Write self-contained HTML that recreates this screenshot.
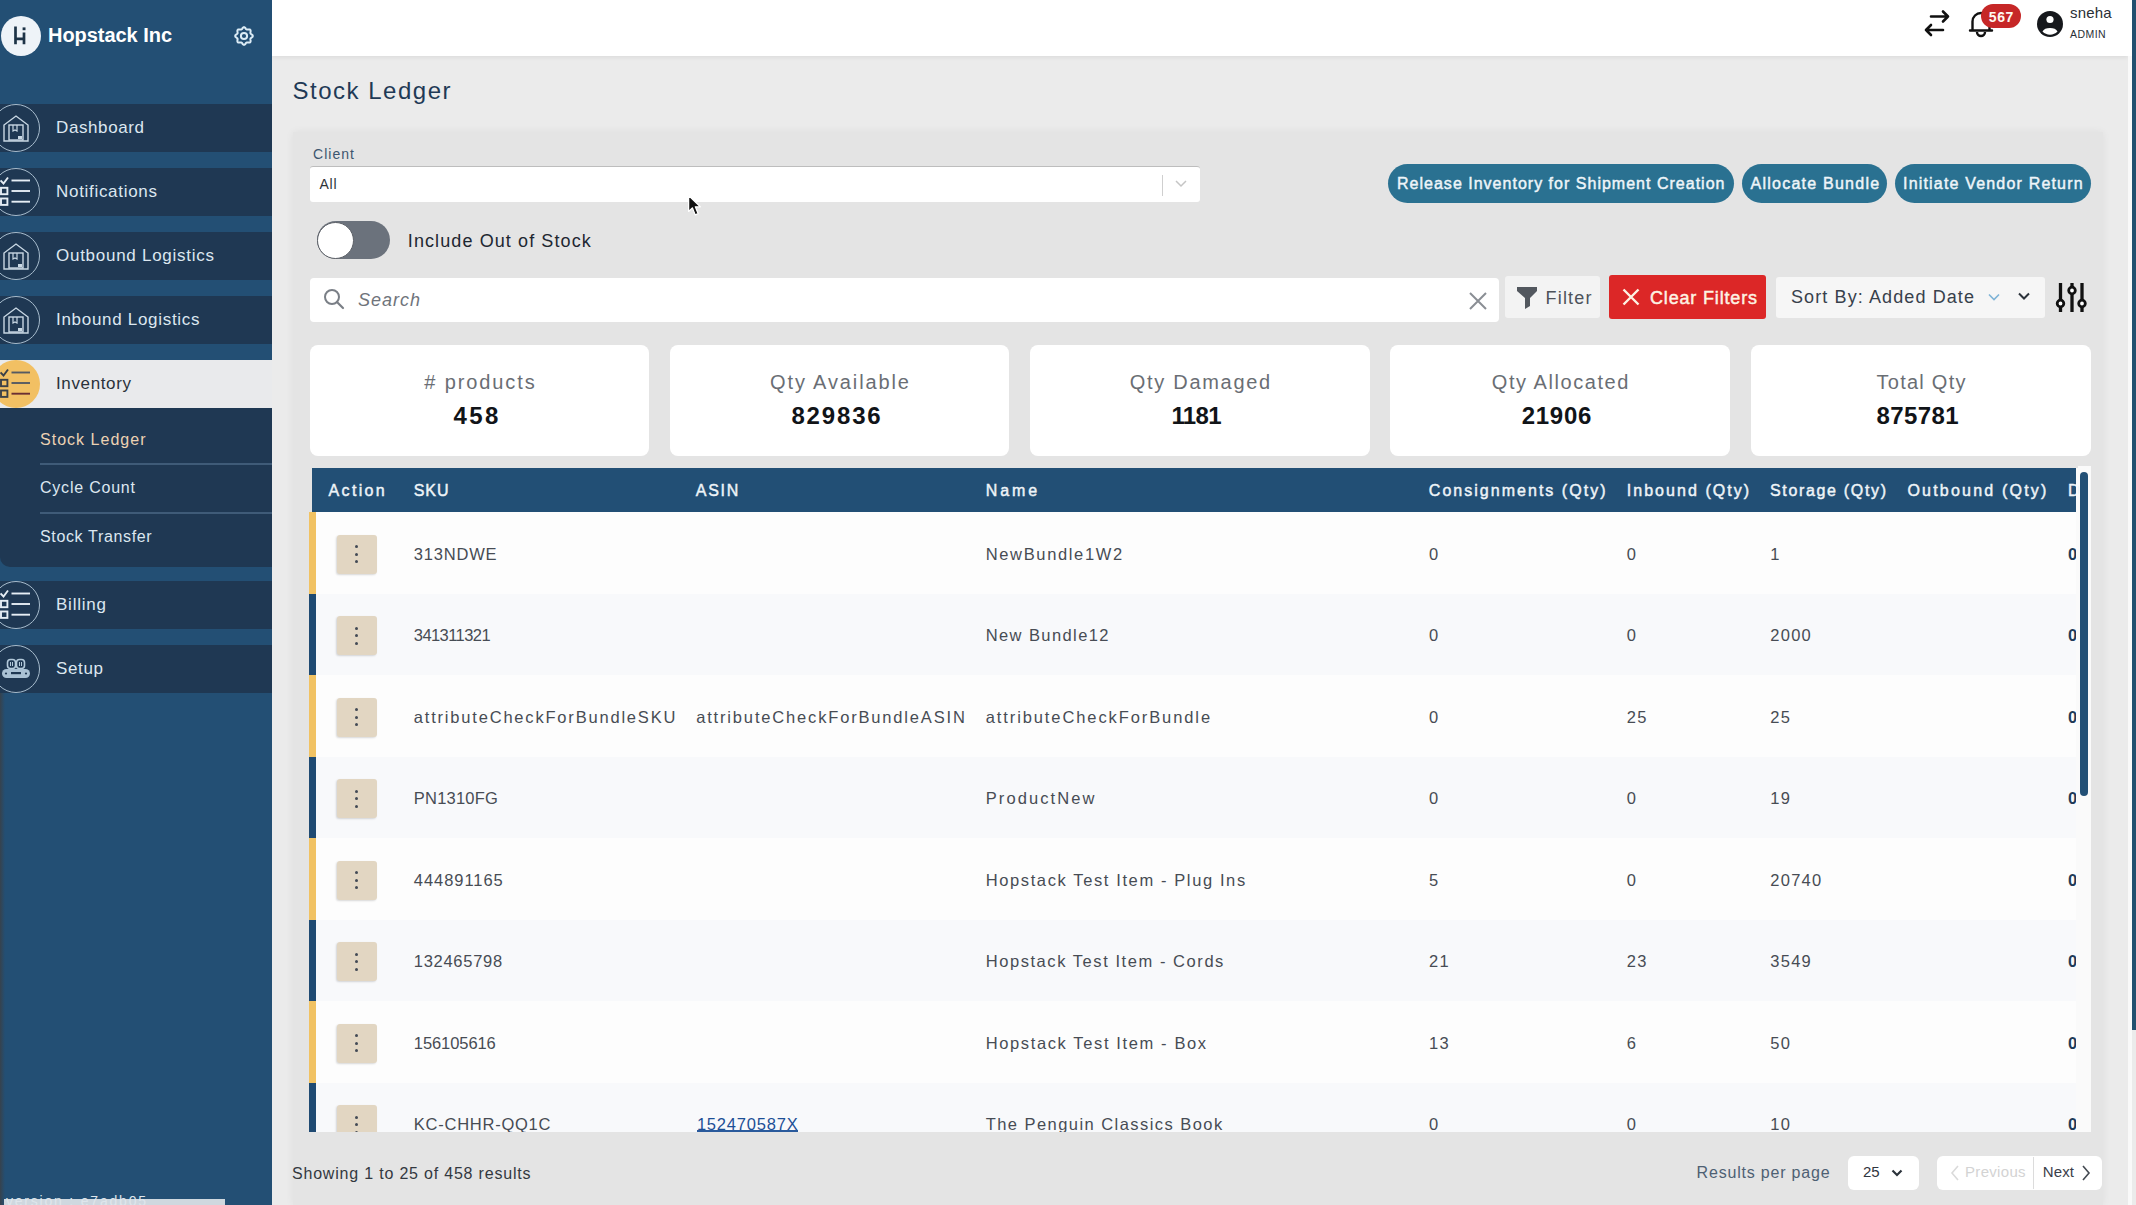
<!DOCTYPE html>
<html><head><meta charset="utf-8">
<style>
*{margin:0;padding:0;box-sizing:border-box}
html,body{width:2136px;height:1205px;overflow:hidden;background:#ebebeb;font-family:"Liberation Sans",sans-serif}
.a{position:absolute}
.t{position:absolute;white-space:nowrap;line-height:1}
svg{position:absolute;overflow:visible}
</style></head><body>
<div class='a' style='left:272px;top:56px;width:1856px;height:1149px;background:#ebebeb'></div>
<div class='a' style='left:293px;top:132px;width:1810px;height:1073px;background:#e4e4e4;box-shadow:0 0 8px rgba(0,0,0,.06)'></div>
<div class='a' style='left:272px;top:0;width:1856px;height:56px;background:#fff;box-shadow:0 2px 4px rgba(0,0,0,.06)'></div>
<div class='a' style='left:2128px;top:0;width:4px;height:1205px;background:#f9f9f9'></div>
<div class='a' style='left:2128px;top:0;width:4px;height:56px;background:#fff'></div>
<div class='a' style='left:2132px;top:0;width:4px;height:1030px;background:#23506f'></div>
<div class='a' style='left:0;top:0;width:272px;height:1205px;background:#234f74'></div>
<div class='a' style='left:0;top:690px;width:7px;height:515px;background:linear-gradient(90deg,#36424d 0,rgba(35,79,116,0) 5px)'></div>
<div class='a' style='left:0;top:104px;width:272px;height:48px;background:#1f3853'></div>
<div class='a' style='left:-8px;top:104px;width:48px;height:48px;border-radius:50%;border:1.4px solid #a7bccd'></div>
<div class='a' style='left:0;top:168px;width:272px;height:48px;background:#1f3853'></div>
<div class='a' style='left:-8px;top:168px;width:48px;height:48px;border-radius:50%;border:1.4px solid #a7bccd'></div>
<div class='a' style='left:0;top:232px;width:272px;height:48px;background:#1f3853'></div>
<div class='a' style='left:-8px;top:232px;width:48px;height:48px;border-radius:50%;border:1.4px solid #a7bccd'></div>
<div class='a' style='left:0;top:296px;width:272px;height:48px;background:#1f3853'></div>
<div class='a' style='left:-8px;top:296px;width:48px;height:48px;border-radius:50%;border:1.4px solid #a7bccd'></div>
<div class='a' style='left:0;top:581px;width:272px;height:48px;background:#1f3853'></div>
<div class='a' style='left:-8px;top:581px;width:48px;height:48px;border-radius:50%;border:1.4px solid #a7bccd'></div>
<div class='a' style='left:0;top:645px;width:272px;height:48px;background:#1f3853'></div>
<div class='a' style='left:-8px;top:645px;width:48px;height:48px;border-radius:50%;border:1.4px solid #a7bccd'></div>
<div class='a' style='left:0;top:360px;width:272px;height:48px;background:#e9eaec'></div>
<div class='a' style='left:-8px;top:360px;width:48px;height:48px;border-radius:50%;background:#f2c063'></div>
<div class='a' style='left:0;top:408px;width:272px;height:159px;background:#1f3853;border-bottom-left-radius:10px'></div>
<div class='a' style='left:40px;top:463px;width:232px;height:1.5px;background:#3f5b78'></div>
<div class='a' style='left:40px;top:512px;width:232px;height:1.5px;background:#3f5b78'></div>
<div class='a' style='left:0.5px;top:15.8px;width:40px;height:40px;border-radius:50%;background:#eef3f8'></div>
<svg style='left:0;top:15px' width='40' height='40' viewBox='0 0 40 40'>
<path d='M15.5 11.5 V29.2 M15.5 23.8 H24 M24 17.6 V29.2' stroke='#1d3347' stroke-width='2.7' fill='none'/>
<rect x='22.6' y='12.4' width='2.9' height='2.8' fill='#1d3347'/></svg>
<svg style='left:232.2px;top:24.2px' width='24' height='24' viewBox='0 0 24 24'>
<path d='M12.00 3.20 L12.57 3.34 L13.09 3.72 L13.54 4.25 L13.93 4.80 L14.29 5.26 L14.68 5.53 L15.15 5.61 L15.72 5.55 L16.39 5.43 L17.08 5.38 L17.72 5.47 L18.22 5.78 L18.53 6.28 L18.62 6.92 L18.57 7.61 L18.45 8.27 L18.39 8.85 L18.47 9.32 L18.74 9.71 L19.20 10.07 L19.75 10.46 L20.28 10.91 L20.66 11.43 L20.80 12.00 L20.66 12.57 L20.28 13.09 L19.75 13.54 L19.20 13.93 L18.74 14.29 L18.47 14.68 L18.39 15.15 L18.45 15.72 L18.57 16.39 L18.62 17.08 L18.53 17.72 L18.22 18.22 L17.72 18.53 L17.08 18.62 L16.39 18.57 L15.72 18.45 L15.15 18.39 L14.68 18.47 L14.29 18.74 L13.93 19.20 L13.54 19.75 L13.09 20.28 L12.57 20.66 L12.00 20.80 L11.43 20.66 L10.91 20.28 L10.46 19.75 L10.07 19.20 L9.71 18.74 L9.32 18.47 L8.85 18.39 L8.28 18.45 L7.61 18.57 L6.92 18.62 L6.28 18.53 L5.78 18.22 L5.47 17.72 L5.38 17.08 L5.43 16.39 L5.55 15.73 L5.61 15.15 L5.53 14.68 L5.26 14.29 L4.80 13.93 L4.25 13.54 L3.72 13.09 L3.34 12.57 L3.20 12.00 L3.34 11.43 L3.72 10.91 L4.25 10.46 L4.80 10.07 L5.26 9.71 L5.53 9.32 L5.61 8.85 L5.55 8.27 L5.43 7.61 L5.38 6.92 L5.47 6.28 L5.78 5.78 L6.28 5.47 L6.92 5.38 L7.61 5.43 L8.27 5.55 L8.85 5.61 L9.32 5.53 L9.71 5.26 L10.07 4.80 L10.46 4.25 L10.91 3.72 L11.43 3.34 Z' fill='none' stroke='#dcecf6' stroke-width='2' stroke-linejoin='round'/>
<circle cx='12' cy='12' r='3.1' fill='none' stroke='#dcecf6' stroke-width='2'/></svg>
<svg style='left:0;top:108px' width='34' height='40' viewBox='0 0 34 40'>
<path d='M4 33 V17 L16 8 L28 17 V33 Z' fill='none' stroke='#c9d8e4' stroke-width='1.4'/>
<rect x='9' y='17' width='14' height='15' fill='none' stroke='#c9d8e4' stroke-width='1.4'/>
<path d='M13 17 V23 L15 22 L17 23 V17' fill='none' stroke='#c9d8e4' stroke-width='1.2'/>
<rect x='18' y='28' width='4' height='3' fill='#c9d8e4'/></svg>
<svg style='left:0;top:236px' width='34' height='40' viewBox='0 0 34 40'>
<path d='M4 33 V17 L16 8 L28 17 V33 Z' fill='none' stroke='#c9d8e4' stroke-width='1.4'/>
<rect x='9' y='17' width='14' height='15' fill='none' stroke='#c9d8e4' stroke-width='1.4'/>
<path d='M13 17 V23 L15 22 L17 23 V17' fill='none' stroke='#c9d8e4' stroke-width='1.2'/>
<rect x='18' y='28' width='4' height='3' fill='#c9d8e4'/></svg>
<svg style='left:0;top:300px' width='34' height='40' viewBox='0 0 34 40'>
<path d='M4 33 V17 L16 8 L28 17 V33 Z' fill='none' stroke='#c9d8e4' stroke-width='1.4'/>
<rect x='9' y='17' width='14' height='15' fill='none' stroke='#c9d8e4' stroke-width='1.4'/>
<path d='M13 17 V23 L15 22 L17 23 V17' fill='none' stroke='#c9d8e4' stroke-width='1.2'/>
<rect x='18' y='28' width='4' height='3' fill='#c9d8e4'/></svg>
<svg style='left:0;top:175px' width='34' height='34' viewBox='0 0 34 34'>
<path d='M0.5 5.5 L3.5 8.5 L8 2.5' fill='none' stroke='#e6eef5' stroke-width='1.9'/>
<rect x='1' y='12.8' width='6.4' height='6.4' fill='none' stroke='#e6eef5' stroke-width='1.9'/>
<rect x='1' y='23.5' width='6.4' height='6.4' fill='none' stroke='#e6eef5' stroke-width='1.9'/>
<path d='M11.5 5.5 H30' stroke='#e6eef5' stroke-width='1.9'/><path d='M11.5 16 H30' stroke='#e6eef5' stroke-width='1.9'/><path d='M11.5 26.7 H30' stroke='#e6eef5' stroke-width='1.9'/></svg>
<svg style='left:0;top:588px' width='34' height='34' viewBox='0 0 34 34'>
<path d='M0.5 5.5 L3.5 8.5 L8 2.5' fill='none' stroke='#e6eef5' stroke-width='1.9'/>
<rect x='1' y='12.8' width='6.4' height='6.4' fill='none' stroke='#e6eef5' stroke-width='1.9'/>
<rect x='1' y='23.5' width='6.4' height='6.4' fill='none' stroke='#e6eef5' stroke-width='1.9'/>
<path d='M11.5 5.5 H30' stroke='#e6eef5' stroke-width='1.9'/><path d='M11.5 16 H30' stroke='#e6eef5' stroke-width='1.9'/><path d='M11.5 26.7 H30' stroke='#e6eef5' stroke-width='1.9'/></svg>
<svg style='left:0;top:367px' width='34' height='34' viewBox='0 0 34 34'>
<path d='M0.5 5.5 L3.5 8.5 L8 2.5' fill='none' stroke='#3a4048' stroke-width='1.9'/>
<rect x='1' y='12.8' width='6.4' height='6.4' fill='none' stroke='#3a4048' stroke-width='1.9'/>
<rect x='1' y='23.5' width='6.4' height='6.4' fill='none' stroke='#3a4048' stroke-width='1.9'/>
<path d='M11.5 5.5 H30' stroke='#555a62' stroke-width='1.9'/><path d='M11.5 16 H30' stroke='#555a62' stroke-width='1.9'/><path d='M11.5 26.7 H30' stroke='#6b2f33' stroke-width='1.9'/></svg>
<svg style='left:0;top:651px' width='34' height='34' viewBox='0 0 34 34'>
<rect x='7.5' y='8.5' width='8' height='9' rx='3' fill='none' stroke='#b3c9da' stroke-width='1.6'/>
<rect x='16.5' y='8.5' width='8' height='9' rx='3' fill='none' stroke='#b3c9da' stroke-width='1.6'/>
<path d='M10.5 11 V15 M12.5 11 V15 M19.5 11 V15 M21.5 11 V15' stroke='#b3c9da' stroke-width='1'/>
<rect x='2' y='18' width='28' height='9' rx='4.5' fill='#a9c1d4'/>
<rect x='11' y='21' width='10' height='2.2' fill='#1f3853'/>
<circle cx='6' cy='22.5' r='1.1' fill='#1f3853'/><circle cx='26' cy='22.5' r='1.1' fill='#1f3853'/></svg>
<div class='a' style='left:4px;top:1199px;width:221px;height:6px;background:#cfd8df'></div>
<svg style='left:1922px;top:9px' width='30' height='30' viewBox='0 0 30 30'>
<path d='M9 7.5 H26 M21 2.5 L26 7.5 L21 12.5' fill='none' stroke='#111' stroke-width='2.6' stroke-linecap='round' stroke-linejoin='round'/>
<path d='M21 21 H4 M9 16 L4 21 L9 26' fill='none' stroke='#111' stroke-width='2.6' stroke-linecap='round' stroke-linejoin='round'/></svg>
<svg style='left:1967px;top:9px' width='30' height='30' viewBox='0 0 30 30'>
<path d='M3 21.5 H25 M5.5 21.5 V12.5 A8.5 8.5 0 0 1 22.5 12.5 V21.5' fill='none' stroke='#111' stroke-width='2.4' stroke-linecap='round'/>
<path d='M10 23 A4 4 0 0 0 18 23' fill='none' stroke='#111' stroke-width='2.4'/></svg>
<div class='a' style='left:1981px;top:4px;width:40px;height:24px;border-radius:12px;background:#c62727'></div>
<svg style='left:2037px;top:11px' width='26' height='26' viewBox='0 0 26 26'>
<circle cx='13' cy='13' r='13' fill='#16181c'/><circle cx='13' cy='8.5' r='3.6' fill='#fff'/>
<path d='M5.5 20.5 A8 5.2 0 0 1 20.5 20.5 A10.5 10.5 0 0 1 5.5 20.5 Z' fill='#fff'/></svg>
<div class='a' style='left:310px;top:166px;width:890px;height:36px;background:#fff;border-top:1px solid #bdbdbd;border-radius:3px'></div>
<div class='a' style='left:1162px;top:175px;width:1.2px;height:21px;background:#cfcfcf'></div>
<svg style='left:1175px;top:179px' width='12' height='10' viewBox='0 0 12 10'><path d='M1 2 L6 7 L11 2' fill='none' stroke='#c5c5c5' stroke-width='1.5'/></svg>
<div class='a' style='left:317px;top:221px;width:73px;height:38px;border-radius:19px;background:#6b727c'></div>
<div class='a' style='left:317px;top:221.5px;width:37px;height:37px;border-radius:50%;background:#fff;border:1.2px solid #5b5f66'></div>
<div class='a' style='left:1388px;top:164px;width:346px;height:39px;border-radius:20px;background:#2a7191'></div>
<div class='a' style='left:1742px;top:164px;width:145px;height:39px;border-radius:20px;background:#2a7191'></div>
<div class='a' style='left:1895px;top:164px;width:196px;height:39px;border-radius:20px;background:#2a7191'></div>
<div class='a' style='left:310px;top:278px;width:1189px;height:44px;background:#fff;border-radius:4px'></div>
<svg style='left:322px;top:287px' width='24' height='24' viewBox='0 0 24 24'><circle cx='10' cy='10' r='7' fill='none' stroke='#7a7f86' stroke-width='2'/><path d='M15 15 L21 21' stroke='#7a7f86' stroke-width='2.2' stroke-linecap='round'/></svg>
<svg style='left:1468px;top:291px' width='20' height='20' viewBox='0 0 20 20'><path d='M2 2 L18 18 M18 2 L2 18' stroke='#8a8e94' stroke-width='2'/></svg>
<div class='a' style='left:1505px;top:276px;width:95px;height:42px;background:#f3f3f3;border-radius:3px'></div>
<svg style='left:1516px;top:286px' width='22' height='23' viewBox='0 0 22 23'><path d='M1 1 H21 V5 L14 12 V20 L9 23 V12 L1 5 Z' fill='#52575e'/></svg>
<div class='a' style='left:1609px;top:275px;width:157px;height:44px;background:#dc2727;border-radius:3px'></div>
<svg style='left:1622px;top:288px' width='18' height='18' viewBox='0 0 18 18'><path d='M1.5 1.5 L16.5 16.5 M16.5 1.5 L1.5 16.5' stroke='#fdf3e4' stroke-width='2.4'/></svg>
<div class='a' style='left:1776px;top:277px;width:269px;height:41px;background:#f6f6f6;border-radius:3px'></div>
<svg style='left:1988px;top:293px' width='12' height='9' viewBox='0 0 12 9'><path d='M1 1.5 L6 6.5 L11 1.5' fill='none' stroke='#7eb3d6' stroke-width='1.6'/></svg>
<svg style='left:2018px;top:292px' width='12' height='9' viewBox='0 0 12 9'><path d='M1 1.5 L6 6.5 L11 1.5' fill='none' stroke='#2c333b' stroke-width='2'/></svg>
<svg style='left:2056px;top:282px' width='32' height='31' viewBox='0 0 32 31'>
<path d='M4.5 1 V30 M16 1 V30 M26 1 V30' stroke='#111' stroke-width='3.3'/>
<circle cx='4.5' cy='21.5' r='3.3' fill='#fff' stroke='#111' stroke-width='2.8'/>
<circle cx='16' cy='8.5' r='3.3' fill='#fff' stroke='#111' stroke-width='2.8'/>
<circle cx='26' cy='21.5' r='3.3' fill='#fff' stroke='#111' stroke-width='2.8'/></svg>
<div class='a' style='left:310px;top:345px;width:339px;height:111px;background:#fff;border-radius:8px'></div>
<div class='a' style='left:670px;top:345px;width:339px;height:111px;background:#fff;border-radius:8px'></div>
<div class='a' style='left:1030px;top:345px;width:340px;height:111px;background:#fff;border-radius:8px'></div>
<div class='a' style='left:1390px;top:345px;width:340px;height:111px;background:#fff;border-radius:8px'></div>
<div class='a' style='left:1751px;top:345px;width:340px;height:111px;background:#fff;border-radius:8px'></div>
<div class='a' style='left:312px;top:468px;width:1764px;height:44px;background:#224f75'></div>
<div class='a' style='left:316px;top:512.0px;width:1760px;height:81.5px;background:#fdfdfd'></div>
<div class='a' style='left:309px;top:512.0px;width:7px;height:81.5px;background:#f1c263'></div>
<div class='a' style='left:336.8px;top:534.5px;width:40px;height:39.2px;background:#e2d6c2;border-radius:3px;box-shadow:-1px 1px 2px rgba(0,0,0,.15)'></div>
<div class='a' style='left:355.3px;top:545.0px;width:3px;height:3px;border-radius:50%;background:#434a55'></div>
<div class='a' style='left:355.3px;top:552.5px;width:3px;height:3px;border-radius:50%;background:#434a55'></div>
<div class='a' style='left:355.3px;top:560.0px;width:3px;height:3px;border-radius:50%;background:#434a55'></div>
<div class='a' style='left:316px;top:593.5px;width:1760px;height:81.5px;background:#f8f9fb'></div>
<div class='a' style='left:309px;top:593.5px;width:7px;height:81.5px;background:#1f4a72'></div>
<div class='a' style='left:336.8px;top:616.0px;width:40px;height:39.2px;background:#e2d6c2;border-radius:3px;box-shadow:-1px 1px 2px rgba(0,0,0,.15)'></div>
<div class='a' style='left:355.3px;top:626.5px;width:3px;height:3px;border-radius:50%;background:#434a55'></div>
<div class='a' style='left:355.3px;top:634.0px;width:3px;height:3px;border-radius:50%;background:#434a55'></div>
<div class='a' style='left:355.3px;top:641.5px;width:3px;height:3px;border-radius:50%;background:#434a55'></div>
<div class='a' style='left:316px;top:675.0px;width:1760px;height:81.5px;background:#fdfdfd'></div>
<div class='a' style='left:309px;top:675.0px;width:7px;height:81.5px;background:#f1c263'></div>
<div class='a' style='left:336.8px;top:697.5px;width:40px;height:39.2px;background:#e2d6c2;border-radius:3px;box-shadow:-1px 1px 2px rgba(0,0,0,.15)'></div>
<div class='a' style='left:355.3px;top:708.0px;width:3px;height:3px;border-radius:50%;background:#434a55'></div>
<div class='a' style='left:355.3px;top:715.5px;width:3px;height:3px;border-radius:50%;background:#434a55'></div>
<div class='a' style='left:355.3px;top:723.0px;width:3px;height:3px;border-radius:50%;background:#434a55'></div>
<div class='a' style='left:316px;top:756.5px;width:1760px;height:81.5px;background:#f8f9fb'></div>
<div class='a' style='left:309px;top:756.5px;width:7px;height:81.5px;background:#1f4a72'></div>
<div class='a' style='left:336.8px;top:779.0px;width:40px;height:39.2px;background:#e2d6c2;border-radius:3px;box-shadow:-1px 1px 2px rgba(0,0,0,.15)'></div>
<div class='a' style='left:355.3px;top:789.5px;width:3px;height:3px;border-radius:50%;background:#434a55'></div>
<div class='a' style='left:355.3px;top:797.0px;width:3px;height:3px;border-radius:50%;background:#434a55'></div>
<div class='a' style='left:355.3px;top:804.5px;width:3px;height:3px;border-radius:50%;background:#434a55'></div>
<div class='a' style='left:316px;top:838.0px;width:1760px;height:81.5px;background:#fdfdfd'></div>
<div class='a' style='left:309px;top:838.0px;width:7px;height:81.5px;background:#f1c263'></div>
<div class='a' style='left:336.8px;top:860.5px;width:40px;height:39.2px;background:#e2d6c2;border-radius:3px;box-shadow:-1px 1px 2px rgba(0,0,0,.15)'></div>
<div class='a' style='left:355.3px;top:871.0px;width:3px;height:3px;border-radius:50%;background:#434a55'></div>
<div class='a' style='left:355.3px;top:878.5px;width:3px;height:3px;border-radius:50%;background:#434a55'></div>
<div class='a' style='left:355.3px;top:886.0px;width:3px;height:3px;border-radius:50%;background:#434a55'></div>
<div class='a' style='left:316px;top:919.5px;width:1760px;height:81.5px;background:#f8f9fb'></div>
<div class='a' style='left:309px;top:919.5px;width:7px;height:81.5px;background:#1f4a72'></div>
<div class='a' style='left:336.8px;top:942.0px;width:40px;height:39.2px;background:#e2d6c2;border-radius:3px;box-shadow:-1px 1px 2px rgba(0,0,0,.15)'></div>
<div class='a' style='left:355.3px;top:952.5px;width:3px;height:3px;border-radius:50%;background:#434a55'></div>
<div class='a' style='left:355.3px;top:960.0px;width:3px;height:3px;border-radius:50%;background:#434a55'></div>
<div class='a' style='left:355.3px;top:967.5px;width:3px;height:3px;border-radius:50%;background:#434a55'></div>
<div class='a' style='left:316px;top:1001.0px;width:1760px;height:81.5px;background:#fdfdfd'></div>
<div class='a' style='left:309px;top:1001.0px;width:7px;height:81.5px;background:#f1c263'></div>
<div class='a' style='left:336.8px;top:1023.5px;width:40px;height:39.2px;background:#e2d6c2;border-radius:3px;box-shadow:-1px 1px 2px rgba(0,0,0,.15)'></div>
<div class='a' style='left:355.3px;top:1034.0px;width:3px;height:3px;border-radius:50%;background:#434a55'></div>
<div class='a' style='left:355.3px;top:1041.5px;width:3px;height:3px;border-radius:50%;background:#434a55'></div>
<div class='a' style='left:355.3px;top:1049.0px;width:3px;height:3px;border-radius:50%;background:#434a55'></div>
<div class='a' style='left:316px;top:1082.5px;width:1760px;height:81.5px;background:#f8f9fb'></div>
<div class='a' style='left:309px;top:1082.5px;width:7px;height:81.5px;background:#1f4a72'></div>
<div class='a' style='left:336.8px;top:1105.0px;width:40px;height:39.2px;background:#e2d6c2;border-radius:3px;box-shadow:-1px 1px 2px rgba(0,0,0,.15)'></div>
<div class='a' style='left:355.3px;top:1115.5px;width:3px;height:3px;border-radius:50%;background:#434a55'></div>
<div class='a' style='left:355.3px;top:1123.0px;width:3px;height:3px;border-radius:50%;background:#434a55'></div>
<div class='a' style='left:355.3px;top:1130.5px;width:3px;height:3px;border-radius:50%;background:#434a55'></div>
<div class='a' style='left:2078px;top:466px;width:13px;height:666px;background:#fafafa'></div>
<div class='a' style='left:2079.5px;top:472px;width:8.5px;height:324px;border-radius:4px;background:#224f75'></div>
<div class='t' style='left:48.0px;top:24.5px;font-size:20px;color:#ffffff;letter-spacing:-0.044px;font-weight:bold;font-style:normal;'>Hopstack Inc</div>
<div class='t' style='left:56.0px;top:118.7px;font-size:17px;color:#dce7f0;letter-spacing:0.604px;font-weight:normal;font-style:normal;'>Dashboard</div>
<div class='t' style='left:56.0px;top:182.8px;font-size:17px;color:#dce7f0;letter-spacing:0.699px;font-weight:normal;font-style:normal;'>Notifications</div>
<div class='t' style='left:56.0px;top:246.8px;font-size:17px;color:#dce7f0;letter-spacing:0.733px;font-weight:normal;font-style:normal;'>Outbound Logistics</div>
<div class='t' style='left:56.0px;top:310.8px;font-size:17px;color:#dce7f0;letter-spacing:0.698px;font-weight:normal;font-style:normal;'>Inbound Logistics</div>
<div class='t' style='left:56.0px;top:596.3px;font-size:17px;color:#dce7f0;letter-spacing:0.773px;font-weight:normal;font-style:normal;'>Billing</div>
<div class='t' style='left:56.0px;top:660.3px;font-size:17px;color:#dce7f0;letter-spacing:0.641px;font-weight:normal;font-style:normal;'>Setup</div>
<div class='t' style='left:56.0px;top:375.1px;font-size:17px;color:#2b323b;letter-spacing:0.633px;font-weight:normal;font-style:normal;'>Inventory</div>
<div class='t' style='left:40.0px;top:431.7px;font-size:16px;color:#ecd2b3;letter-spacing:1.020px;font-weight:normal;font-style:normal;'>Stock Ledger</div>
<div class='t' style='left:40.0px;top:480.3px;font-size:16px;color:#dce7f0;letter-spacing:0.784px;font-weight:normal;font-style:normal;'>Cycle Count</div>
<div class='t' style='left:40.0px;top:529.1px;font-size:16px;color:#dce7f0;letter-spacing:0.650px;font-weight:normal;font-style:normal;'>Stock Transfer</div>
<div class='t' style='left:6.0px;top:1194.1px;font-size:14px;color:#dfe6ec;letter-spacing:1.793px;font-weight:normal;font-style:normal;'>version : e7adb05</div>
<div class='t' style='left:1988.7px;top:10.1px;font-size:14px;color:#fff8f0;letter-spacing:0.670px;font-weight:bold;font-style:normal;'>567</div>
<div class='t' style='left:2070.0px;top:5.2px;font-size:15px;color:#2a2f36;letter-spacing:0.206px;font-weight:normal;font-style:normal;'>sneha</div>
<div class='t' style='left:2070.0px;top:28.7px;font-size:10.5px;color:#2a2f36;letter-spacing:0.439px;font-weight:normal;font-style:normal;'>ADMIN</div>
<div class='t' style='left:292.5px;top:79.3px;font-size:24px;color:#1f3a56;letter-spacing:1.507px;font-weight:normal;font-style:normal;'>Stock Ledger</div>
<div class='t' style='left:313.0px;top:147.4px;font-size:14px;color:#3d566f;letter-spacing:1.041px;font-weight:normal;font-style:normal;'>Client</div>
<div class='t' style='left:319.5px;top:177.0px;font-size:14px;color:#2f3338;letter-spacing:0.719px;font-weight:normal;font-style:normal;'>All</div>
<div class='t' style='left:407.8px;top:232.2px;font-size:18px;color:#1e2731;letter-spacing:1.100px;font-weight:normal;font-style:normal;'>Include Out of Stock</div>
<div class='t' style='left:1397.0px;top:176.0px;font-size:16px;color:#eef5f9;letter-spacing:1.012px;font-weight:normal;-webkit-text-stroke:0.45px currentColor;font-style:normal;'>Release Inventory for Shipment Creation</div>
<div class='t' style='left:1750.5px;top:176.0px;font-size:16px;color:#eef5f9;letter-spacing:1.244px;font-weight:normal;-webkit-text-stroke:0.45px currentColor;font-style:normal;'>Allocate Bundle</div>
<div class='t' style='left:1903.0px;top:176.0px;font-size:16px;color:#eef5f9;letter-spacing:1.183px;font-weight:normal;-webkit-text-stroke:0.45px currentColor;font-style:normal;'>Initiate Vendor Return</div>
<div class='t' style='left:358.0px;top:291.2px;font-size:18px;color:#6f747b;letter-spacing:0.991px;font-weight:normal;font-style:italic;'>Search</div>
<div class='t' style='left:1545.5px;top:288.7px;font-size:18px;color:#4d525a;letter-spacing:1.200px;font-weight:normal;font-style:normal;'>Filter</div>
<div class='t' style='left:1650.0px;top:288.7px;font-size:18px;color:#fdf3e4;letter-spacing:0.832px;font-weight:normal;-webkit-text-stroke:0.45px currentColor;font-style:normal;'>Clear Filters</div>
<div class='t' style='left:1791.0px;top:288.4px;font-size:18px;color:#38414c;letter-spacing:1.105px;font-weight:normal;font-style:normal;'>Sort By: Added Date</div>
<div class='t' style='left:424.2px;top:371.8px;font-size:20px;color:#6a6e74;letter-spacing:1.901px;font-weight:normal;font-style:normal;'># products</div>
<div class='t' style='left:453.6px;top:404.0px;font-size:24px;color:#111418;letter-spacing:2.377px;font-weight:bold;font-style:normal;'>458</div>
<div class='t' style='left:770.0px;top:371.8px;font-size:20px;color:#6a6e74;letter-spacing:1.885px;font-weight:normal;font-style:normal;'>Qty Available</div>
<div class='t' style='left:791.4px;top:404.0px;font-size:24px;color:#111418;letter-spacing:1.841px;font-weight:bold;font-style:normal;'>829836</div>
<div class='t' style='left:1129.8px;top:371.8px;font-size:20px;color:#6a6e74;letter-spacing:1.701px;font-weight:normal;font-style:normal;'>Qty Damaged</div>
<div class='t' style='left:1171.5px;top:404.0px;font-size:24px;color:#111418;letter-spacing:-0.693px;font-weight:bold;font-style:normal;'>1181</div>
<div class='t' style='left:1491.8px;top:371.8px;font-size:20px;color:#6a6e74;letter-spacing:1.555px;font-weight:normal;font-style:normal;'>Qty Allocated</div>
<div class='t' style='left:1521.8px;top:404.0px;font-size:24px;color:#111418;letter-spacing:0.688px;font-weight:bold;font-style:normal;'>21906</div>
<div class='t' style='left:1876.5px;top:371.8px;font-size:20px;color:#6a6e74;letter-spacing:1.260px;font-weight:normal;font-style:normal;'>Total Qty</div>
<div class='t' style='left:1876.5px;top:404.0px;font-size:24px;color:#111418;letter-spacing:0.381px;font-weight:bold;font-style:normal;'>875781</div>
<div class='t' style='left:328.6px;top:482.8px;font-size:16px;color:#eef4f8;letter-spacing:2.306px;font-weight:normal;-webkit-text-stroke:0.45px currentColor;font-style:normal;'>Action</div>
<div class='t' style='left:413.8px;top:482.8px;font-size:16px;color:#eef4f8;letter-spacing:0.897px;font-weight:normal;-webkit-text-stroke:0.45px currentColor;font-style:normal;'>SKU</div>
<div class='t' style='left:695.7px;top:482.8px;font-size:16px;color:#eef4f8;letter-spacing:1.785px;font-weight:normal;-webkit-text-stroke:0.45px currentColor;font-style:normal;'>ASIN</div>
<div class='t' style='left:985.7px;top:482.8px;font-size:16px;color:#eef4f8;letter-spacing:2.904px;font-weight:normal;-webkit-text-stroke:0.45px currentColor;font-style:normal;'>Name</div>
<div class='t' style='left:1428.8px;top:482.8px;font-size:16px;color:#eef4f8;letter-spacing:2.026px;font-weight:normal;-webkit-text-stroke:0.45px currentColor;font-style:normal;'>Consignments (Qty)</div>
<div class='t' style='left:1626.7px;top:482.8px;font-size:16px;color:#eef4f8;letter-spacing:2.056px;font-weight:normal;-webkit-text-stroke:0.45px currentColor;font-style:normal;'>Inbound (Qty)</div>
<div class='t' style='left:1770.0px;top:482.8px;font-size:16px;color:#eef4f8;letter-spacing:1.664px;font-weight:normal;-webkit-text-stroke:0.45px currentColor;font-style:normal;'>Storage (Qty)</div>
<div class='t' style='left:1907.4px;top:482.8px;font-size:16px;color:#eef4f8;letter-spacing:2.209px;font-weight:normal;-webkit-text-stroke:0.45px currentColor;font-style:normal;'>Outbound (Qty)</div>
<div class='t' style='left:2068.0px;top:482.8px;font-size:16px;color:#eef4f8;letter-spacing:0.000px;font-weight:normal;-webkit-text-stroke:0.45px currentColor;font-style:normal;letter-spacing:1.2px'>D</div>
<div class='t' style='left:413.8px;top:545.7px;font-size:16.5px;color:#474c54;letter-spacing:0.808px;font-weight:normal;font-style:normal;'>313NDWE</div>
<div class='t' style='left:985.7px;top:545.7px;font-size:16.5px;color:#474c54;letter-spacing:1.653px;font-weight:normal;font-style:normal;'>NewBundle1W2</div>
<div class='t' style='left:1429.0px;top:545.7px;font-size:16.5px;color:#474c54;letter-spacing:0.000px;font-weight:normal;font-style:normal;letter-spacing:1.3px'>0</div>
<div class='t' style='left:1626.7px;top:545.7px;font-size:16.5px;color:#474c54;letter-spacing:0.000px;font-weight:normal;font-style:normal;letter-spacing:1.3px'>0</div>
<div class='t' style='left:1770.2px;top:545.7px;font-size:16.5px;color:#474c54;letter-spacing:0.000px;font-weight:normal;font-style:normal;letter-spacing:1.3px'>1</div>
<div class='t' style='left:2068.0px;top:545.7px;font-size:16.5px;color:#1f3b58;letter-spacing:0.000px;font-weight:bold;font-style:normal;'>0</div>
<div class='t' style='left:413.8px;top:627.2px;font-size:16.5px;color:#474c54;letter-spacing:-0.572px;font-weight:normal;font-style:normal;'>341311321</div>
<div class='t' style='left:985.7px;top:627.2px;font-size:16.5px;color:#474c54;letter-spacing:1.407px;font-weight:normal;font-style:normal;'>New Bundle12</div>
<div class='t' style='left:1429.0px;top:627.2px;font-size:16.5px;color:#474c54;letter-spacing:0.000px;font-weight:normal;font-style:normal;letter-spacing:1.3px'>0</div>
<div class='t' style='left:1626.7px;top:627.2px;font-size:16.5px;color:#474c54;letter-spacing:0.000px;font-weight:normal;font-style:normal;letter-spacing:1.3px'>0</div>
<div class='t' style='left:1770.2px;top:627.2px;font-size:16.5px;color:#474c54;letter-spacing:0.000px;font-weight:normal;font-style:normal;letter-spacing:1.3px'>2000</div>
<div class='t' style='left:2068.0px;top:627.2px;font-size:16.5px;color:#1f3b58;letter-spacing:0.000px;font-weight:bold;font-style:normal;'>0</div>
<div class='t' style='left:413.8px;top:708.7px;font-size:16.5px;color:#474c54;letter-spacing:1.806px;font-weight:normal;font-style:normal;'>attributeCheckForBundleSKU</div>
<div class='t' style='left:696.2px;top:708.7px;font-size:16.5px;color:#474c54;letter-spacing:1.833px;font-weight:normal;font-style:normal;'>attributeCheckForBundleASIN</div>
<div class='t' style='left:985.7px;top:708.7px;font-size:16.5px;color:#474c54;letter-spacing:1.904px;font-weight:normal;font-style:normal;'>attributeCheckForBundle</div>
<div class='t' style='left:1429.0px;top:708.7px;font-size:16.5px;color:#474c54;letter-spacing:0.000px;font-weight:normal;font-style:normal;letter-spacing:1.3px'>0</div>
<div class='t' style='left:1626.7px;top:708.7px;font-size:16.5px;color:#474c54;letter-spacing:0.000px;font-weight:normal;font-style:normal;letter-spacing:1.3px'>25</div>
<div class='t' style='left:1770.2px;top:708.7px;font-size:16.5px;color:#474c54;letter-spacing:0.000px;font-weight:normal;font-style:normal;letter-spacing:1.3px'>25</div>
<div class='t' style='left:2068.0px;top:708.7px;font-size:16.5px;color:#1f3b58;letter-spacing:0.000px;font-weight:bold;font-style:normal;'>0</div>
<div class='t' style='left:413.8px;top:790.2px;font-size:16.5px;color:#474c54;letter-spacing:0.222px;font-weight:normal;font-style:normal;'>PN1310FG</div>
<div class='t' style='left:985.7px;top:790.2px;font-size:16.5px;color:#474c54;letter-spacing:2.103px;font-weight:normal;font-style:normal;'>ProductNew</div>
<div class='t' style='left:1429.0px;top:790.2px;font-size:16.5px;color:#474c54;letter-spacing:0.000px;font-weight:normal;font-style:normal;letter-spacing:1.3px'>0</div>
<div class='t' style='left:1626.7px;top:790.2px;font-size:16.5px;color:#474c54;letter-spacing:0.000px;font-weight:normal;font-style:normal;letter-spacing:1.3px'>0</div>
<div class='t' style='left:1770.2px;top:790.2px;font-size:16.5px;color:#474c54;letter-spacing:0.000px;font-weight:normal;font-style:normal;letter-spacing:1.3px'>19</div>
<div class='t' style='left:2068.0px;top:790.2px;font-size:16.5px;color:#1f3b58;letter-spacing:0.000px;font-weight:bold;font-style:normal;'>0</div>
<div class='t' style='left:413.8px;top:871.7px;font-size:16.5px;color:#474c54;letter-spacing:0.953px;font-weight:normal;font-style:normal;'>444891165</div>
<div class='t' style='left:985.7px;top:871.7px;font-size:16.5px;color:#474c54;letter-spacing:1.614px;font-weight:normal;font-style:normal;'>Hopstack Test Item - Plug Ins</div>
<div class='t' style='left:1429.0px;top:871.7px;font-size:16.5px;color:#474c54;letter-spacing:0.000px;font-weight:normal;font-style:normal;letter-spacing:1.3px'>5</div>
<div class='t' style='left:1626.7px;top:871.7px;font-size:16.5px;color:#474c54;letter-spacing:0.000px;font-weight:normal;font-style:normal;letter-spacing:1.3px'>0</div>
<div class='t' style='left:1770.2px;top:871.7px;font-size:16.5px;color:#474c54;letter-spacing:0.000px;font-weight:normal;font-style:normal;letter-spacing:1.3px'>20740</div>
<div class='t' style='left:2068.0px;top:871.7px;font-size:16.5px;color:#1f3b58;letter-spacing:0.000px;font-weight:bold;font-style:normal;'>0</div>
<div class='t' style='left:413.8px;top:953.2px;font-size:16.5px;color:#474c54;letter-spacing:0.713px;font-weight:normal;font-style:normal;'>132465798</div>
<div class='t' style='left:985.7px;top:953.2px;font-size:16.5px;color:#474c54;letter-spacing:1.560px;font-weight:normal;font-style:normal;'>Hopstack Test Item - Cords</div>
<div class='t' style='left:1429.0px;top:953.2px;font-size:16.5px;color:#474c54;letter-spacing:0.000px;font-weight:normal;font-style:normal;letter-spacing:1.3px'>21</div>
<div class='t' style='left:1626.7px;top:953.2px;font-size:16.5px;color:#474c54;letter-spacing:0.000px;font-weight:normal;font-style:normal;letter-spacing:1.3px'>23</div>
<div class='t' style='left:1770.2px;top:953.2px;font-size:16.5px;color:#474c54;letter-spacing:0.000px;font-weight:normal;font-style:normal;letter-spacing:1.3px'>3549</div>
<div class='t' style='left:2068.0px;top:953.2px;font-size:16.5px;color:#1f3b58;letter-spacing:0.000px;font-weight:bold;font-style:normal;'>0</div>
<div class='t' style='left:413.8px;top:1034.7px;font-size:16.5px;color:#474c54;letter-spacing:-0.074px;font-weight:normal;font-style:normal;'>156105616</div>
<div class='t' style='left:985.7px;top:1034.7px;font-size:16.5px;color:#474c54;letter-spacing:1.621px;font-weight:normal;font-style:normal;'>Hopstack Test Item - Box</div>
<div class='t' style='left:1429.0px;top:1034.7px;font-size:16.5px;color:#474c54;letter-spacing:0.000px;font-weight:normal;font-style:normal;letter-spacing:1.3px'>13</div>
<div class='t' style='left:1626.7px;top:1034.7px;font-size:16.5px;color:#474c54;letter-spacing:0.000px;font-weight:normal;font-style:normal;letter-spacing:1.3px'>6</div>
<div class='t' style='left:1770.2px;top:1034.7px;font-size:16.5px;color:#474c54;letter-spacing:0.000px;font-weight:normal;font-style:normal;letter-spacing:1.3px'>50</div>
<div class='t' style='left:2068.0px;top:1034.7px;font-size:16.5px;color:#1f3b58;letter-spacing:0.000px;font-weight:bold;font-style:normal;'>0</div>
<div class='t' style='left:413.8px;top:1116.2px;font-size:16.5px;color:#474c54;letter-spacing:0.751px;font-weight:normal;font-style:normal;'>KC-CHHR-QQ1C</div>
<div class='t' style='left:696.9px;top:1116.2px;font-size:16.5px;color:#1d4f96;letter-spacing:0.799px;font-weight:normal;font-style:normal;'>152470587X</div>
<div class='t' style='left:985.7px;top:1116.2px;font-size:16.5px;color:#474c54;letter-spacing:1.447px;font-weight:normal;font-style:normal;'>The Penguin Classics Book</div>
<div class='t' style='left:1429.0px;top:1116.2px;font-size:16.5px;color:#474c54;letter-spacing:0.000px;font-weight:normal;font-style:normal;letter-spacing:1.3px'>0</div>
<div class='t' style='left:1626.7px;top:1116.2px;font-size:16.5px;color:#474c54;letter-spacing:0.000px;font-weight:normal;font-style:normal;letter-spacing:1.3px'>0</div>
<div class='t' style='left:1770.2px;top:1116.2px;font-size:16.5px;color:#474c54;letter-spacing:0.000px;font-weight:normal;font-style:normal;letter-spacing:1.3px'>10</div>
<div class='t' style='left:2068.0px;top:1116.2px;font-size:16.5px;color:#1f3b58;letter-spacing:0.000px;font-weight:bold;font-style:normal;'>0</div>

<div class='a' style='left:293px;top:1132px;width:1810px;height:73px;background:#e4e4e4'></div>
<div class='a' style='left:2076px;top:468px;width:2px;height:664px;background:#fafafa'></div>

<div class='a' style='left:697px;top:1130.2px;width:100.5px;height:1.6px;background:#2a5a9c'></div>
<div class='a' style='left:1848px;top:1156px;width:71px;height:34px;background:#fff;border-radius:6px'></div>
<div class='a' style='left:1937px;top:1156px;width:165px;height:34px;background:#fff;border-radius:6px'></div>
<div class='a' style='left:2033px;top:1157px;width:1px;height:32px;background:#dcdcdc'></div>
<svg style='left:1891px;top:1169px' width='12' height='9' viewBox='0 0 12 9'><path d='M1.5 1.5 L6 6 L10.5 1.5' fill='none' stroke='#2c333b' stroke-width='2.2'/></svg>
<svg style='left:1951px;top:1165px' width='8' height='16' viewBox='0 0 8 16'><path d='M7 1 L1 8 L7 15' fill='none' stroke='#dadada' stroke-width='1.6'/></svg>
<svg style='left:2082px;top:1165px' width='8' height='16' viewBox='0 0 8 16'><path d='M1 1 L7 8 L1 15' fill='none' stroke='#444a52' stroke-width='1.6'/></svg>
<svg style='left:688px;top:194.5px' width='16' height='25' viewBox='0 0 14 22'><path d='M0.5 0.5 L0.5 14.5 L3.8 11.3 L6.3 17.5 L8.9 16.4 L6.4 10.4 L10.8 10.4 Z' fill='#111' stroke='#fff' stroke-width='1.1' stroke-linejoin='round'/></svg><div class='t' style='left:292.0px;top:1165.6px;font-size:16px;color:#33383f;letter-spacing:0.802px;font-weight:normal;font-style:normal;'>Showing 1 to 25 of 458 results</div>
<div class='t' style='left:1696.6px;top:1165.4px;font-size:16px;color:#4e6073;letter-spacing:0.802px;font-weight:normal;font-style:normal;'>Results per page</div>
<div class='t' style='left:1863.0px;top:1163.8px;font-size:15px;color:#2f3540;letter-spacing:-0.188px;font-weight:normal;font-style:normal;'>25</div>
<div class='t' style='left:1965.0px;top:1164.2px;font-size:15px;color:#d3d3d3;letter-spacing:0.320px;font-weight:normal;font-style:normal;'>Previous</div>
<div class='t' style='left:2042.7px;top:1164.2px;font-size:15px;color:#3a4049;letter-spacing:0.152px;font-weight:normal;font-style:normal;'>Next</div>
</body></html>
